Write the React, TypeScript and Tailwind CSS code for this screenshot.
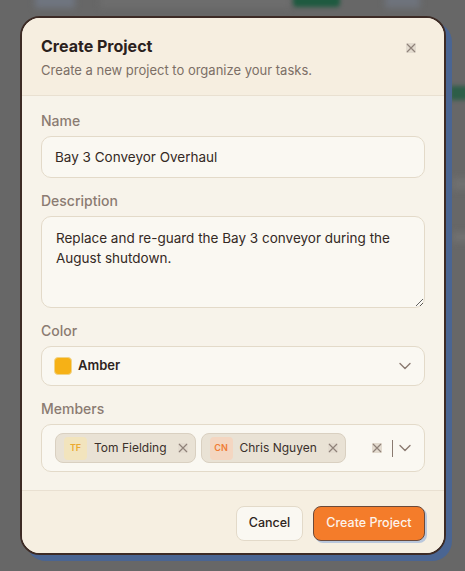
import React from "react";

const font = { fontFamily: "Inter, 'Liberation Sans', sans-serif" };

function XIcon({ className = "" }: { className?: string }) {
  return (
    <span className={`inline-flex items-center justify-center w-[10px] h-[10px] bg-[#e3dbcf] ${className}`}>
      <svg width="10" height="10" viewBox="0 0 10 10" fill="none">
        <path d="M1 1L9 9M9 1L1 9" stroke="#8f8279" strokeWidth="1.2" />
      </svg>
    </span>
  );
}

function Chevron() {
  return (
    <svg width="12" height="8" viewBox="0 0 12 8" fill="none">
      <path d="M1 1.5L6 6.5L11 1.5" stroke="#8a7a70" strokeWidth="1.4" strokeLinecap="round" strokeLinejoin="round" />
    </svg>
  );
}

function Chip({ initials, name, avBg, avFg }: { initials: string; name: string; avBg: string; avFg: string }) {
  return (
    <div className="flex items-center h-[30px] rounded-[8px] bg-[#e9e2d5] border border-[#d9d0c1] pl-[8px] pr-[7px]">
      <div className={`w-[23px] h-[23px] rounded-[4px] flex items-center justify-center text-[9px] font-semibold ${avBg} ${avFg}`}>
        {initials}
      </div>
      <span className="ml-[7px] text-[12px] text-[#3b302b]">{name}</span>
      <XIcon className="ml-[11px]" />
    </div>
  );
}

export default function App() {
  return (
    <div className="relative w-[465px] h-[571px] bg-[#676767] overflow-hidden" style={font}>
      {/* blurred background content */}
      <div className="absolute left-[35px] top-[-6px] w-[40px] h-[14px] bg-[#6f7580] blur-[3px]" />
      <div className="absolute left-[100px] top-[-6px] w-[190px] h-[14px] bg-[#6d6d6d] blur-[3px]" />
      <div className="absolute left-[293px] top-[-6px] w-[47px] h-[13px] rounded bg-[#1f5a40] blur-[2px]" />
      <div className="absolute left-[385px] top-[-6px] w-[35px] h-[14px] bg-[#6e737c] blur-[3px]" />
      <div className="absolute left-[450px] top-[86px] w-[30px] h-[14px] bg-[#2d5e48] blur-[2px]" />
      <div className="absolute left-[452px] top-[178px] w-[30px] h-[12px] bg-[#707070] blur-[3px]" />
      <div className="absolute left-[452px] top-[232px] w-[30px] h-[10px] bg-[#717171] blur-[3px]" />

      <div className="pt-[16px] pl-[20px]">
        <div className="relative w-[426px] h-[539px] flex flex-col rounded-[20px] border-2 border-[#3d2b25] overflow-hidden shadow-[6px_6px_0_#4a6592] bg-[#f7f3ea]">
          {/* header */}
          <div className="bg-[#f6eee0] px-[19px] pt-[16px] pb-[15px] border-b border-[#e9e0d1] relative">
            <h2 className="text-[16px] leading-[24px] font-bold text-[#2b211d]">Create Project</h2>
            <p className="mt-[2px] text-[13px] leading-[20px] text-[#7c6e66]">Create a new project to organize your tasks.</p>
            <XIcon className="absolute right-[28px] top-[25px]" />
          </div>

          {/* body */}
          <div className="flex-1 px-[19px] pt-[15px] flex flex-col">
            <label className="text-[14px] leading-[20px] font-medium text-[#8b7b72]">Name</label>
            <div className="mt-[5px] h-[42px] rounded-[10px] border border-[#e3dac9] bg-[#faf8f2] px-[13px] flex items-center text-[13.5px] text-[#342924]">
              Bay 3 Conveyor Overhaul
            </div>

            <label className="mt-[13px] text-[14px] leading-[20px] font-medium text-[#8b7b72]">Description</label>
            <textarea
              readOnly
              className="mt-[5px] h-[92px] rounded-[10px] border border-[#e3dac9] bg-[#faf8f2] px-[14px] py-[11px] text-[13.5px] leading-[20px] text-[#342924] outline-none"
              style={font}
              value="Replace and re-guard the Bay 3 conveyor during the August shutdown."
            />

            <label className="mt-[13px] text-[14px] leading-[20px] font-medium text-[#8b7b72]">Color</label>
            <div className="mt-[5px] h-[40px] rounded-[10px] border border-[#e3dac9] bg-[#faf8f2] pl-[12px] pr-[13px] flex items-center">
              <span className="w-[18px] h-[18px] rounded-[4px] bg-[#f6b116] border border-[#f1d488]" />
              <span className="ml-[6px] text-[13px] font-semibold text-[#2e2420]">Amber</span>
              <span className="ml-auto flex"><Chevron /></span>
            </div>

            <label className="mt-[13px] text-[14px] leading-[20px] font-medium text-[#8b7b72]">Members</label>
            <div className="mt-[5px] h-[48px] rounded-[10px] border border-[#e3dac9] bg-[#faf8f2] pl-[13px] pr-[13px] flex items-center">
              <div className="flex gap-[5px]">
                <Chip initials="TF" name="Tom Fielding" avBg="bg-[#f2e4bd]" avFg="text-[#eba92f]" />
                <Chip initials="CN" name="Chris Nguyen" avBg="bg-[#f4d6c1]" avFg="text-[#f07c35]" />
              </div>
              <div className="ml-auto flex items-center">
                <XIcon />
                <span className="ml-[10px] w-[1.5px] h-[17px] bg-[#8a7a70]" />
                <span className="ml-[6px] flex"><Chevron /></span>
              </div>
            </div>
          </div>

          {/* footer */}
          <div className="bg-[#f6efe1] border-t border-[#e9e0d1] px-[19px] pt-[15px] pb-[12px] flex justify-end gap-[10px]">
            <button className="h-[35px] w-[67px] rounded-[8px] border border-[#e3dac9] bg-[#faf8f2] text-[12.5px] font-medium text-[#2e2420]">
              Cancel
            </button>
            <button className="h-[35px] w-[112px] rounded-[8px] border border-[#6b4a3a] bg-[#f47c2a] text-[12.5px] font-medium text-[#fdf3ea] shadow-[2px_2px_0_#b9c7dc]">
              Create Project
            </button>
          </div>
        </div>
      </div>
    </div>
  );
}
